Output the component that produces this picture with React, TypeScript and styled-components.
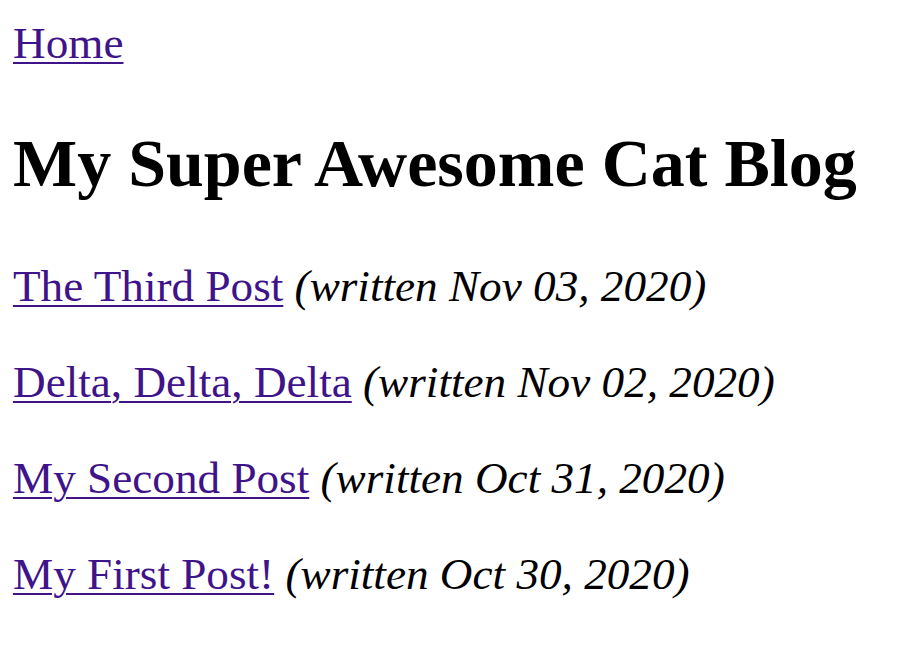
import React from 'react';
import styled, { createGlobalStyle } from 'styled-components';

const GlobalStyle = createGlobalStyle`
  body {
    margin: 0;
    background: #ffffff;
    font-family: "Liberation Serif", "Times New Roman", serif;
    color: #000000;
  }
`;

const Page = styled.div`
  padding: 13px 13px 0 13px;
  font-size: 45.2px;
  line-height: 1.15;
`;

const Nav = styled.nav`
  padding-top: 5px;
`;

const Link = styled.a`
  color: #3f1389;
  text-decoration: underline;
  text-decoration-thickness: 2px;
  text-underline-offset: 4px;
`;

const Title = styled.h1`
  margin: 54px 0 59px 0;
  font-size: 68px;
  font-weight: bold;
  line-height: 1.15;
`;

const PostList = styled.div`
  display: flex;
  flex-direction: column;
  gap: 44px;
`;

const PostRow = styled.p`
  margin: 0;
`;

const PostDate = styled.em`
  font-style: italic;
`;

const posts = [
  { title: 'The Third Post', date: 'Nov 03, 2020' },
  { title: 'Delta, Delta, Delta', date: 'Nov 02, 2020' },
  { title: 'My Second Post', date: 'Oct 31, 2020' },
  { title: 'My First Post!', date: 'Oct 30, 2020' },
];

const App: React.FC = () => {
  return (
    <>
      <GlobalStyle />
      <Page>
        <Nav>
          <Link href="#">Home</Link>
        </Nav>
        <Title>My Super Awesome Cat Blog</Title>
        <PostList>
          {posts.map(post => (
            <PostRow key={post.title}>
              <Link href="#">{post.title}</Link>{' '}
              <PostDate>(written {post.date})</PostDate>
            </PostRow>
          ))}
        </PostList>
      </Page>
    </>
  );
};

export default App;
